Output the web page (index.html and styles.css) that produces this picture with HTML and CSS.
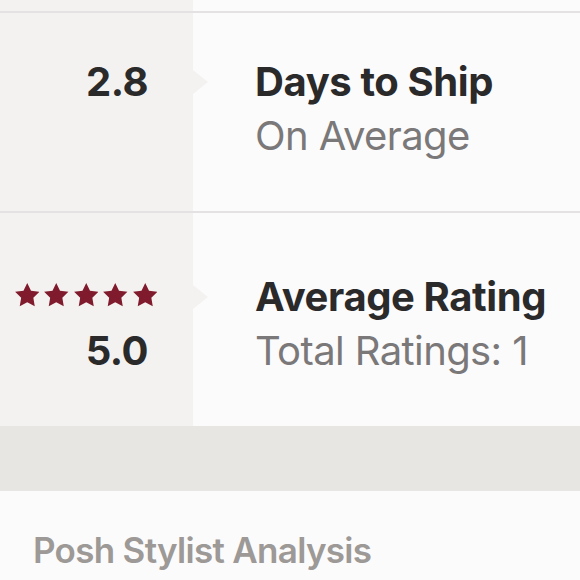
FILE: index.html
```html
<!DOCTYPE html>
<html>
<head>
<meta charset="utf-8">
<link rel="stylesheet" href="styles.css">
</head>
<body>
<div class="stats">
  <div class="row row-top">
    <div class="left"></div>
    <div class="right"></div>
  </div>
  <div class="row row-ship">
    <div class="left">
      <div class="value">2.8</div>
    </div>
    <div class="right">
      <div class="title">Days to Ship</div>
      <div class="sub">On Average</div>
    </div>
  </div>
  <div class="row row-rating">
    <div class="left">
      <div class="stars">
        <svg viewBox="0.5 0.5 23 22" class="star"><polygon points="12,0.5 15.53,7.65 23.41,8.79 17.71,14.35 19.05,22.21 12,18.5 4.95,22.21 6.29,14.35 0.59,8.79 8.47,7.65"/></svg>
        <svg viewBox="0.5 0.5 23 22" class="star"><polygon points="12,0.5 15.53,7.65 23.41,8.79 17.71,14.35 19.05,22.21 12,18.5 4.95,22.21 6.29,14.35 0.59,8.79 8.47,7.65"/></svg>
        <svg viewBox="0.5 0.5 23 22" class="star"><polygon points="12,0.5 15.53,7.65 23.41,8.79 17.71,14.35 19.05,22.21 12,18.5 4.95,22.21 6.29,14.35 0.59,8.79 8.47,7.65"/></svg>
        <svg viewBox="0.5 0.5 23 22" class="star"><polygon points="12,0.5 15.53,7.65 23.41,8.79 17.71,14.35 19.05,22.21 12,18.5 4.95,22.21 6.29,14.35 0.59,8.79 8.47,7.65"/></svg>
        <svg viewBox="0.5 0.5 23 22" class="star"><polygon points="12,0.5 15.53,7.65 23.41,8.79 17.71,14.35 19.05,22.21 12,18.5 4.95,22.21 6.29,14.35 0.59,8.79 8.47,7.65"/></svg>
      </div>
      <div class="value">5.0</div>
    </div>
    <div class="right">
      <div class="title">Average Rating</div>
      <div class="sub">Total Ratings: 1</div>
    </div>
  </div>
</div>
<div class="band"></div>
<div class="section">
  <h2 class="section-title">Posh Stylist Analysis</h2>
</div>
</body>
</html>
```
FILE: styles.css
```css
html, body {
  margin: 0;
  padding: 0;
  background: #fcfbfc;
  font-family: Inter, "Liberation Sans", sans-serif;
}

.row {
  display: grid;
  grid-template-columns: 193px 1fr;
}

.row-top {
  height: 11px;
  border-bottom: 2px solid #e4e2e2;
}

.row-ship {
  height: 198px;
  border-bottom: 2px solid #e4e2e2;
}

.row-rating {
  height: 213px;
}

.left {
  background: #f4f2f0;
  display: flex;
  flex-direction: column;
  align-items: flex-end;
  padding-right: 45px;
}

.right {
  padding-left: 62px;
}

.row-ship .left,
.row-ship .right {
  padding-top: 45px;
}

.row-rating .left,
.row-rating .right {
  padding-top: 60px;
}

.value {
  font-size: 40px;
  line-height: 48px;
  font-weight: 700;
  color: #2b2a2b;
  letter-spacing: -0.5px;
}

.row-rating .value {
  margin-top: 6px;
}

.title {
  position: relative;
  font-size: 40px;
  line-height: 48px;
  font-weight: 700;
  color: #2b2a2b;
  letter-spacing: -0.4px;
}

.title::before {
  content: "";
  position: absolute;
  left: -62px;
  top: 50%;
  transform: translateY(-50%);
  border-top: 12px solid transparent;
  border-bottom: 12px solid transparent;
  border-left: 15px solid #f4f2f0;
}

.sub {
  margin-top: 6px;
  font-size: 40px;
  line-height: 48px;
  font-weight: 400;
  color: #7a7878;
  letter-spacing: -0.6px;
}

.stars {
  height: 48px;
  box-sizing: border-box;
  padding-top: 10px;
  margin-right: -9px;
  display: flex;
  gap: 5px;
}

.star {
  width: 24.5px;
  height: 23.5px;
  fill: #7f1b2d;
}

.band {
  height: 65px;
  background: #e8e6e3;
}

.section {
  padding: 37px 33px 0;
}

.section-title {
  margin: 0;
  font-size: 35px;
  line-height: 44px;
  font-weight: 600;
  color: #9c9996;
  letter-spacing: -0.7px;
}
```
